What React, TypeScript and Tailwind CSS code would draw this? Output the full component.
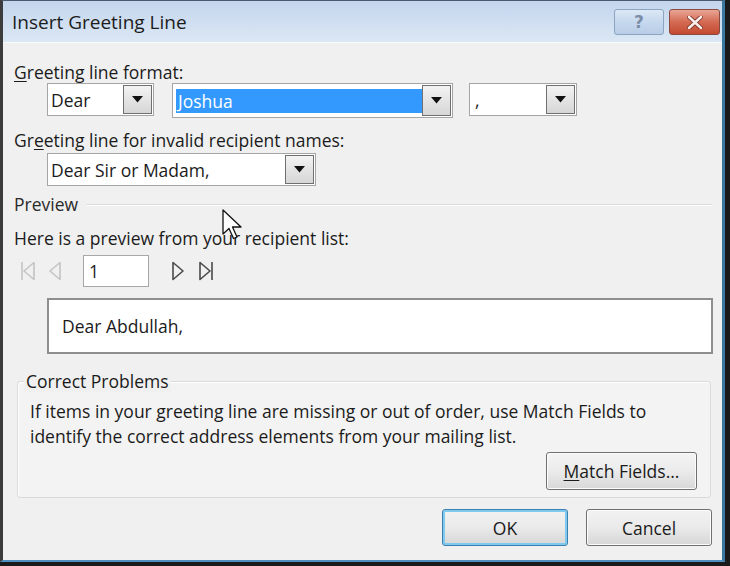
import React from 'react'

const font = { fontFamily: '"Open Sans", "Liberation Sans", sans-serif' }

function DropButton() {
  return (
    <div className="flex h-full w-[29px] items-center justify-center border border-[#707070] bg-gradient-to-b from-[#f3f3f3] to-[#d6d6d6]">
      <svg width="11" height="7" viewBox="0 0 11 7">
        <path d="M0 0 L11 0 L5.5 6.5 Z" fill="#111" />
      </svg>
    </div>
  )
}

function Combo({ width, height = 'h-[33px]', children }: { width: string; height?: string; children: React.ReactNode }) {
  return (
    <div className={`flex ${width} ${height} items-stretch border border-[#a5a5a5] bg-white p-px`}>
      <div className="flex flex-1 items-center overflow-hidden">{children}</div>
      <DropButton />
    </div>
  )
}

function NavIcon({ dir, bar, color }: { dir: 'left' | 'right'; bar?: boolean; color: string }) {
  return (
    <svg width="16" height="20" viewBox="0 0 16 20" fill="none" stroke={color} strokeWidth="1.6">
      {dir === 'left' ? (
        <>
          {bar && <path d="M2 1 V19" />}
          <path d="M14 1.5 L4 10 L14 18.5 Z" strokeLinejoin="round" />
        </>
      ) : (
        <>
          <path d="M2 1.5 L12 10 L2 18.5 Z" strokeLinejoin="round" />
          {bar && <path d="M14 1 V19" />}
        </>
      )}
    </svg>
  )
}

export default function App() {
  return (
    <div className="relative h-[566px] w-[730px] overflow-hidden bg-[#1a1a1a] text-[#1b1b1b]" style={font}>
      {/* window frame */}
      <div className="flex h-[562px] w-[725px] flex-col border-l-[3px] border-t border-r-[3px] border-b-2 border-l-[#3c3c3c] border-t-[#4a5a6a] border-r-[#3a78a0] border-b-[#4f8fc0] bg-[#f0f0f0]">
        {/* title bar */}
        <div className="flex h-[41px] items-start justify-between bg-gradient-to-b from-[#c3d6ed] to-[#dbe7f4] pl-[9px] pr-[2px]">
          <div className="pt-[7px] text-[19px] text-[#1c1c1c]">Insert Greeting Line</div>
          <div className="mt-[8px] flex gap-[5px]">
            <div className="flex h-[26px] w-[50px] items-center justify-center rounded-[3px] border border-[#8da4c0] bg-gradient-to-b from-[#dce8f5] via-[#c6d8ee] to-[#b8cde6]">
              <span className="text-[17px] font-bold leading-none text-[#7a8ea8]" style={{ fontFamily: '"DejaVu Sans", sans-serif' }}>?</span>
            </div>
            <div className="flex h-[26px] w-[51px] items-center justify-center rounded-[3px] border border-[#8a4a40] bg-gradient-to-b from-[#e8a597] via-[#d46a52] to-[#c24a30]">
              <svg width="16" height="13" viewBox="0 0 16 13">
                <path d="M2 1 L14 12 M14 1 L2 12" stroke="#6b2a20" strokeWidth="4.2" strokeLinecap="round" />
                <path d="M2 1 L14 12 M14 1 L2 12" stroke="#fbeeea" strokeWidth="2.6" strokeLinecap="round" />
              </svg>
            </div>
          </div>
        </div>

        {/* client area */}
        <div className="flex flex-1 flex-col border-t border-[#f7f9fb] pl-[11px] pr-[10px] text-[17.5px] leading-[22px]">
          <div className="mt-[18px]">
            <span className="underline underline-offset-2">G</span>reeting line format:
          </div>
          <div className="mt-0 flex items-start pl-[33px]">
            <Combo width="w-[107px]">
              <span className="pl-[2px]">Dear</span>
            </Combo>
            <div className="ml-[18px]">
              <Combo width="w-[281px]" height="h-[35px]">
                <div className="ml-[2px] flex h-[24px] w-[246px] items-center bg-[#3399ff] pl-[2px] text-white">Joshua</div>
              </Combo>
            </div>
            <div className="ml-[16px]">
              <Combo width="w-[108px]">
                <span className="pl-[4px]">,</span>
              </Combo>
            </div>
          </div>

          <div className="mt-[11px]">
            Gr<span className="underline underline-offset-2">e</span>eting line for invalid recipient names:
          </div>
          <div className="mt-[2px] pl-[33px]">
            <Combo width="w-[269px]">
              <span className="pl-[2px]">Dear Sir or Madam,</span>
            </Combo>
          </div>

          <div className="mt-[7px] flex items-center gap-[8px] text-[#2a2a2a]">
            <span>Preview</span>
            <div className="mt-[1px] h-[2px] flex-1 border-t border-b border-t-[#dcdcdc] border-b-white" />
          </div>
          <div className="mt-[12px]">Here is a preview from your recipient list:</div>

          <div className="mt-[6px] flex h-[32px] items-center pl-[6px]">
            <NavIcon dir="left" bar color="#c4c4c4" />
            <div className="ml-[10px]">
              <NavIcon dir="left" color="#c4c4c4" />
            </div>
            <div className="ml-[21px] flex h-[32px] w-[66px] items-center border border-[#a8a8a8] bg-white pl-[5px]">1</div>
            <div className="ml-[22px]">
              <NavIcon dir="right" color="#4a4a4a" />
            </div>
            <div className="ml-[11px]">
              <NavIcon dir="right" bar color="#4a4a4a" />
            </div>
          </div>

          <div className="ml-[33px] mt-[11px] flex h-[56px] w-[666px] items-center border-2 border-[#8e8e8e] bg-white pl-[13px]">
            Dear Abdullah,
          </div>

          <fieldset className="ml-[3px] mt-[16px] h-[128px] w-[694px] rounded-[3px] border border-[#dadada] bg-[#f3f3f3] pl-[12px] pr-[12px] shadow-[inset_1px_1px_0_#fff]">
            <legend className="-ml-[6px] bg-[#f0f0f0] px-[2px]">Correct Problems</legend>
            <p className="mt-[7px] leading-[25px]">
              If items in your greeting line are missing or out of order, use Match Fields to
              <br />
              identify the correct address elements from your mailing list.
            </p>
            <div className="mt-[3px] flex justify-end pr-[1px]">
              <button className="h-[38px] w-[151px] rounded-[3px] border border-[#707070] bg-gradient-to-b from-[#f4f4f4] via-[#ebebeb] to-[#d8d8d8] shadow-[inset_0_0_0_1px_#fcfcfc]">
                <span className="underline underline-offset-2">M</span>atch Fields...
              </button>
            </div>
          </fieldset>

          <div className="mt-[11px] flex justify-end gap-[18px] pr-[0px]">
            <button className="h-[37px] w-[126px] rounded-[3px] border border-[#3c7fb1] bg-gradient-to-b from-[#f2f2f2] via-[#eaeaea] to-[#d6d6d6] shadow-[inset_0_0_0_2px_#7fc9ee]">
              OK
            </button>
            <button className="h-[37px] w-[126px] rounded-[3px] border border-[#707070] bg-gradient-to-b from-[#f2f2f2] via-[#eaeaea] to-[#d6d6d6] shadow-[inset_0_0_0_1px_#fcfcfc]">
              Cancel
            </button>
          </div>
        </div>
      </div>

      {/* mouse pointer */}
      <svg className="absolute left-[222px] top-[209px]" width="24" height="32" viewBox="0 0 24 32">
        <path d="M1 1 L1 25 L7 19.5 L11.5 29.5 L15 28 L10.5 18 L19 18 Z" fill="#fff" stroke="#111" strokeWidth="1.3" strokeLinejoin="round" />
      </svg>
    </div>
  )
}
